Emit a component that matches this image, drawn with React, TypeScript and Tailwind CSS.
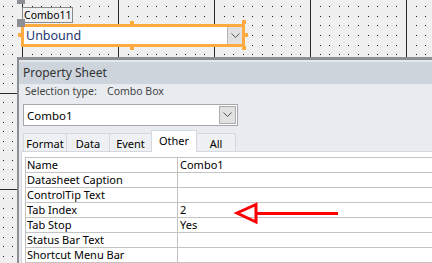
import React from "react";

const FONT = "font-['Noto_Sans','Open_Sans',sans-serif]";

// form design surface: 1px dots every 9.6px, solid lines every 96px
const DesignGrid = () => {
  let dots = "";
  for (let i = 0; i < 46; i++) {
    for (let j = 0; j < 29; j++) {
      const x = Math.round(2.8 + 9.6 * i);
      const y = Math.round(-3.3 + 9.6 * j);
      if (y >= 0) dots += `M${x} ${y}h1v1h-1z`;
    }
  }
  return (
    <svg className="absolute inset-0" width={432} height={263}>
      <path d={dots} fill="#1a1a1a" />
      {[22, 118, 214, 310, 406].map((x) => (
        <rect key={x} x={x} y={0} width={1} height={263} fill="#2a2a2a" />
      ))}
      {[93, 189].map((y) => (
        <rect key={y} x={0} y={y} width={432} height={1} fill="#2a2a2a" />
      ))}
    </svg>
  );
};

const Chevron = () => (
  <svg width="9" height="6" viewBox="0 0 9 6">
    <path d="M0.5 0.5 L4.5 4.5 L8.5 0.5" fill="none" stroke="#555" strokeWidth="1" />
  </svg>
);

const rows: [string, string][] = [
  ["Name", "Combo1"],
  ["Datasheet Caption", ""],
  ["ControlTip Text", ""],
  ["Tab Index", "2"],
  ["Tab Stop", "Yes"],
  ["Status Bar Text", ""],
  ["Shortcut Menu Bar", ""],
];

const tabs = ["Format", "Data", "Event", "Other", "All"];
const tabWidths = ["w-[44px]", "w-[44px]", "w-[43px]", "w-[46px]", "w-[40px]"];

const FormControls = () => (
  <div className="relative h-[57px]">
    <div className="absolute left-[17px] top-[-4px] w-[8px] h-[8px] bg-[#8c9096]" />
    <div className="absolute left-[22px] top-[7px] w-[51px] h-[16px] border border-[#8a8a8a] bg-[#f0f0f0] pl-[1px] text-[10.5px] leading-[14px] text-black">
      Combo11
    </div>
    <div className="absolute left-[21px] top-[24px] w-[224px] h-[23px] border-[3px] border-[#ffab40] bg-white flex">
      <div className="flex-1 pl-[2px] text-[12.5px] leading-[17px] text-[#1d3670]">Unbound</div>
      <div className="w-[15px] h-full bg-[#e1e1e1] border-l border-[#b4b4b4] flex items-center justify-center">
        <Chevron />
      </div>
    </div>
    <div className="absolute left-[17px] top-[19px] w-[8px] h-[8px] bg-[#8c9096]" />
    <div className="absolute left-[130px] top-[21px] w-[4px] h-[4px] bg-[#ffab40]" />
    <div className="absolute left-[130px] top-[46px] w-[4px] h-[4px] bg-[#ffab40]" />
    <div className="absolute left-[18px] top-[33px] w-[4px] h-[4px] bg-[#ffab40]" />
    <div className="absolute left-[242px] top-[20px] w-[4px] h-[4px] bg-[#ffab40]" />
    <div className="absolute left-[244px] top-[33px] w-[4px] h-[4px] bg-[#ffab40]" />
    <div className="absolute left-[242px] top-[46px] w-[4px] h-[4px] bg-[#ffab40]" />
  </div>
);

const PropertySheet = () => (
  <div className="relative ml-[17px] h-[206px] flex flex-col border-t-[3px] border-l-2 border-[#8c9096] bg-[#e8ebf0]">
    <div className="h-[2px] bg-[#e4e8ed]" />
    <div className="h-[22px] bg-[#cdd4dc] pl-[4px] flex items-center text-[12px] text-[#333]">
      Property Sheet
    </div>
    <div className="h-[16px] pl-[6px] flex items-center text-[10.5px] text-[#444]">
      <span className="w-[82px] shrink-0">Selection type:</span>
      <span>Combo Box</span>
    </div>
    <div className="mt-[5px] ml-[4px] w-[215px] h-[22px] border border-[#a8a8a8] bg-white flex items-center">
      <div className="flex-1 pl-[3px] text-[11.5px] text-black">Combo1</div>
      <div className="mr-[1px] w-[17px] h-[18px] bg-[#e1e1e1] border border-[#adadad] flex items-center justify-center">
        <Chevron />
      </div>
    </div>
    <div className="mt-[4px] ml-[4px] h-[21px] flex items-end">
      {tabs.map((t, i) =>
        t === "Other" ? (
          <div
            key={t}
            className={`${tabWidths[i]} h-[22px] -mb-[1px] -ml-px relative z-10 bg-white border border-b-0 border-[#d4d7dc] flex justify-center pt-[2px] text-[11px] leading-[15px] text-black`}
          >
            {t}
          </div>
        ) : (
          <div
            key={t}
            className={`${tabWidths[i]} h-[18px] bg-[#eef0f3] border border-b-0 border-[#d4d7dc] -ml-px first:ml-0 flex justify-center pt-[2px] text-[11px] leading-[15px] text-black`}
          >
            {t}
          </div>
        )
      )}
    </div>
    <div className="flex-1 ml-[2px] bg-white border-l border-t border-[#d4d7dc] pt-[5px] pl-[3px]">
      <div className="border-t border-l border-[#c3c3c3]">
        {rows.map(([k, v]) => (
          <div key={k} className="flex h-[15px] border-b border-[#c3c3c3] text-[11px] leading-[14px] text-black">
            <div className="w-[152px] pl-[1px] border-r border-[#c3c3c3]">{k}</div>
            <div className="flex-1 pl-[2px]">{v}</div>
          </div>
        ))}
      </div>
    </div>
  </div>
);

const Arrow = () => (
  <svg className="absolute left-0 top-0" width={432} height={263}>
    <line x1={256} y1={213.5} x2={338} y2={213.5} stroke="#ff0000" strokeWidth={3} />
    <polygon points="237,213 256,204.5 256,222" fill="none" stroke="#ff0000" strokeWidth={3} />
  </svg>
);

export default function App() {
  return (
    <div className={`relative w-[432px] h-[263px] overflow-hidden bg-[#f0f0f0] ${FONT}`}>
      <DesignGrid />
      <FormControls />
      <PropertySheet />
      <Arrow />
    </div>
  );
}
